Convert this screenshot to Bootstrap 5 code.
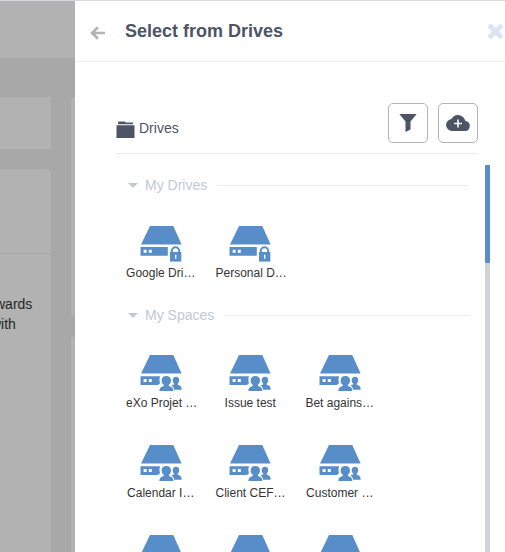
<!DOCTYPE html>
<html lang="en">
<head>
<meta charset="utf-8">
<meta name="viewport" content="width=device-width, initial-scale=1">
<title>Select from Drives</title>
<link href="https://cdn.jsdelivr.net/npm/bootstrap@5.3.0/dist/css/bootstrap.min.css" rel="stylesheet">
<style>
body { font-family: "Liberation Sans", Arial, sans-serif; font-size: 14px; line-height: 20px; color: #333; border-top: 1px solid #d8d8df; }
svg { display: block; }
.behind { width: 75px; background: #a8a8a8; color: #262626; }
.behind-bar { height: 57px; background: #b2b2b2; margin-bottom: 39px; }
.panel { background: #b2b2b2; }
.panel-a { height: 52px; }
.panel-b { border-radius: 0 5px 0 0; }
.panel-head { height: 85px; border-bottom: 1px solid #a9a9a9; }
.panel-side { width: 4px; }
.side-a { height: 220px; border-radius: 4px 0 0 4px; }
.left-col { width: 51px; }
.stack { gap: 20px; }
.cut-a { margin-left: -5px; }
.cut-b { margin-left: -9px; }
.drawer-head { height: 61px; border-bottom: 1px solid #f0f0f0; padding: 0 1px 0 15px; }
.drawer-head h1 { font-size: 18px; line-height: 24px; color: #4d5466; margin-left: 20px; }
.plain { border: 0; background: none; padding: 0; }
.tools { margin: 41px 27px 0 41px; padding-bottom: 10px; border-bottom: 1px solid #ebebeb; color: #4d5466; }
.tool-group { gap: 10px; }
.tool-btn { width: 40px; height: 40px; border: 1px solid #b3b3b3; border-radius: 5px; background: #fff; color: #4d5466; }
.crumb { color: #4d5466; gap: 4px; margin-top: 14px; }
.content-area { padding: 11px 15px 0 41px; min-height: 0; }
.drive-list { margin-right: 11px; }
.section-head { height: 40px; padding: 0 5px 0 12px; color: #c2c8d6; }
.section-head button { color: inherit; gap: 7px; }
.rule { height: 1px; background: #ebebeb; margin-left: 10px; }
.drive { height: 90px; padding: 20px 10px 0; font-size: 12px; line-height: 16px; color: #333; }
.drive svg { margin: 0 auto 3px; color: #578dc9; }
.track { width: 5px; background: #d0d3d7; }
.thumb { height: 98px; background: #578dc9; border-radius: 1px; }
</style>
<script src="https://cdn.jsdelivr.net/npm/bootstrap@5.3.0/dist/js/bootstrap.bundle.min.js"></script>
</head>
<body class="vh-100 overflow-hidden d-flex">
<svg class="d-none" aria-hidden="true">
  <symbol id="private" viewBox="0 0 42 37">
    <path fill="currentColor" d="M10 1H33.3L41.6 19.6H1ZM.5 22H27.8V30.8H.5Z"/>
    <path fill="#fff" d="M3.6 24.8h3v3h-3zM8.8 24.8h3v3h-3z"/>
    <path fill="none" stroke="currentColor" stroke-width="2" d="M31.8 28v-2a3.7 3.7 0 0 1 7.4 0v2"/>
    <path fill="currentColor" d="M30 27h11.3v9.6H30z"/>
    <path fill="#fff" d="M35 29.8h1.4v4H35z"/>
  </symbol>
  <symbol id="shared" viewBox="0 1 42 37">
    <path fill="currentColor" d="M10 1H33.3L41.6 19.6H1ZM.5 22.200H20Q18.800 26 20 29.200L18 31H.5Z"/>
    <path fill="#fff" d="M3.6 25h3v3h-3zM8.8 25h3v3h-3z"/>
    <path fill="currentColor" d="M36 22.800c2 0 3.400 1.400 3.200 3.400-.1 1.700-.6 2.700-1.500 3.500v1.100c2.300.7 4 1.200 4 4.900h-7.600c-.2-2.200-1.200-3.400-2.800-4.200 1-.5 2-.8 2.900-1.300v-.6c-.9-.9-1.500-2-1.500-3.400 0-2 1.300-3.400 3.300-3.400z"/>
    <path fill="currentColor" d="M26.300 21.900c3 0 4.800 1.800 4.700 4.500-.1 2.200-.9 3.400-2.100 4.400v1.100c2.500.9 4.500 1.600 4.500 5.100h-14c0-3.500 1.900-4.200 4.400-5.100v-1.100c-1.300-1-2.100-2.200-2.200-4.400-.1-2.700 1.700-4.500 4.700-4.500z"/>
  </symbol>
</svg>

<div class="behind flex-shrink-0 d-flex flex-column overflow-hidden">
  <div class="behind-bar flex-shrink-0"></div>
  <div class="d-flex flex-grow-1 stack">
    <div class="left-col d-flex flex-column stack">
      <div class="panel panel-a"></div>
      <div class="panel panel-b flex-grow-1">
        <div class="panel-head"></div>
        <div class="pt-4 mt-3 text-nowrap">
          <div class="cut-a">wards</div>
          <div class="cut-b">with</div>
        </div>
      </div>
    </div>
    <div class="panel-side d-flex flex-column stack">
      <div class="panel side-a"></div>
      <div class="panel flex-grow-1"></div>
    </div>
  </div>
</div>

<main class="flex-grow-1 d-flex flex-column bg-white overflow-hidden">
  <header class="drawer-head flex-shrink-0 d-flex align-items-center">
    <button class="plain" type="button" aria-label="Back">
      <svg class="mt-1" width="15" height="14" viewBox="0 0 15 14" fill="none" stroke="#b4b4b4" stroke-width="2.6"><path d="M8 1.3 2 7l6 5.700M2 7h13"/></svg>
    </button>
    <h1 class="mb-0 fw-bold flex-grow-1">Select from Drives</h1>
    <button class="plain" type="button" aria-label="Close">
      <svg width="17" height="17" viewBox="0 0 17 17" stroke="#dee3f2" stroke-width="5"><path d="m2.200 2.200 12.600 12.600M14.800 2.200 2.200 14.800"/></svg>
    </button>
  </header>

  <div class="tools d-flex align-items-start">
    <a class="crumb d-flex align-items-center text-decoration-none me-auto" href="#">
      <svg class="mt-1" width="19" height="18" viewBox="0 0 19 18" fill="currentColor"><path d="M2 3V1.500Q2 .5 3 .5H8.500L10 1.500H17V3.200H2ZM.5 4.200H18.500V17H.5Z"/></svg>
      <span>Drives</span>
    </a>
    <div class="tool-group d-flex">
      <button class="tool-btn d-flex align-items-center justify-content-center p-0" type="button" aria-label="Filter">
        <svg width="18" height="18" viewBox="0 0 18 18" fill="currentColor"><path d="M.3 0H17.700L11.500 7.500V15.500L6.500 18V7.500Z"/></svg>
      </button>
      <button class="tool-btn d-flex align-items-center justify-content-center p-0" type="button" aria-label="Add cloud drive">
        <svg width="24" height="16" viewBox="0 0 24 16"><path fill="currentColor" d="M19.350 6.040A7.490 7.490 0 0 0 12 0C9.110 0 6.600 1.640 5.350 4.040A6 6 0 0 0 6 16h13a5 5 0 0 0 .35-9.960z"/><path d="M12 4.500v8M8 8.500h8" stroke="#fff" stroke-width="1.600"/></svg>
      </button>
    </div>
  </div>

  <div class="content-area d-flex flex-grow-1">
    <div class="drive-list flex-grow-1 overflow-hidden">
      <section>
        <div class="section-head d-flex align-items-center">
          <button class="plain d-flex align-items-center" type="button" aria-expanded="true"><svg width="10" height="5" viewBox="0 0 10 5" fill="currentColor"><path d="M0 0H10L5 5Z"/></svg>My Drives</button>
          <div class="rule flex-grow-1"></div>
        </div>
        <div class="row row-cols-3 g-0 w-75">
          <a class="drive col text-center text-nowrap text-decoration-none" href="#"><svg width="42" height="37"><use href="#private"/></svg>Google Dri…</a>
          <a class="drive col text-center text-nowrap text-decoration-none" href="#"><svg width="42" height="37"><use href="#private"/></svg>Personal D…</a>
        </div>
      </section>
      <section>
        <div class="section-head d-flex align-items-center">
          <button class="plain d-flex align-items-center" type="button" aria-expanded="true"><svg width="10" height="5" viewBox="0 0 10 5" fill="currentColor"><path d="M0 0H10L5 5Z"/></svg>My Spaces</button>
          <div class="rule flex-grow-1"></div>
        </div>
        <div class="row row-cols-3 g-0 w-75">
          <a class="drive col text-center text-nowrap text-decoration-none" href="#"><svg width="42" height="37"><use href="#shared"/></svg>eXo Projet …</a>
          <a class="drive col text-center text-nowrap text-decoration-none" href="#"><svg width="42" height="37"><use href="#shared"/></svg>Issue test</a>
          <a class="drive col text-center text-nowrap text-decoration-none" href="#"><svg width="42" height="37"><use href="#shared"/></svg>Bet agains…</a>
          <a class="drive col text-center text-nowrap text-decoration-none" href="#"><svg width="42" height="37"><use href="#shared"/></svg>Calendar I…</a>
          <a class="drive col text-center text-nowrap text-decoration-none" href="#"><svg width="42" height="37"><use href="#shared"/></svg>Client CEF…</a>
          <a class="drive col text-center text-nowrap text-decoration-none" href="#"><svg width="42" height="37"><use href="#shared"/></svg>Customer …</a>
          <a class="drive col" href="#" aria-label="Space drive"><svg width="42" height="37"><use href="#shared"/></svg></a>
          <a class="drive col" href="#" aria-label="Space drive"><svg width="42" height="37"><use href="#shared"/></svg></a>
          <a class="drive col" href="#" aria-label="Space drive"><svg width="42" height="37"><use href="#shared"/></svg></a>
        </div>
      </section>
    </div>
    <div class="track flex-shrink-0"><div class="thumb"></div></div>
  </div>
</main>
</body>
</html>
